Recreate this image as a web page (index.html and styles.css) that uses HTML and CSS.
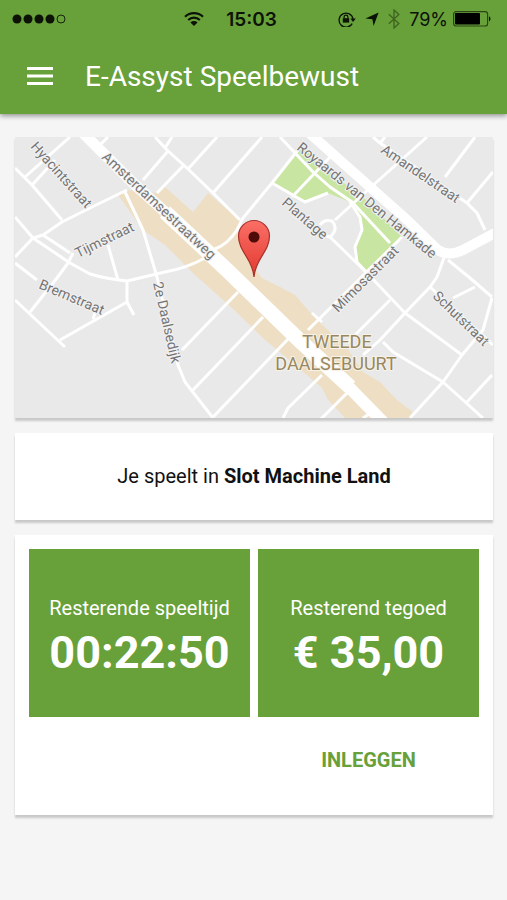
FILE: index.html
```html
<!DOCTYPE html>
<html lang="nl">
<head>
  <meta charset="UTF-8">
  <meta name="viewport" content="width=device-width, initial-scale=1.0">
  <title>E-Assyst Speelbewust</title>
  <link rel="stylesheet" href="styles.css">
</head>
<body>
  <header class="app-header">
    <div class="status-bar">
      <div class="status-left">
        <svg class="signal" width="54" height="12" viewBox="0 0 54 12" aria-hidden="true">
          <circle cx="5" cy="6" r="4.5"/>
          <circle cx="16" cy="6" r="4.5"/>
          <circle cx="27" cy="6" r="4.5"/>
          <circle cx="38" cy="6" r="4.5"/>
          <circle cx="49" cy="6" r="4" fill="none" stroke="#16220c"/>
        </svg>
        <svg width="20" height="14" viewBox="0 0 20 14" aria-hidden="true">
          <g fill="none" stroke="#0c1206" stroke-width="2.2">
            <path d="M1 4.8a13 13 0 0 1 18 0"/>
            <path d="M4.2 8a8.5 8.5 0 0 1 11.6 0"/>
          </g>
          <path d="M10 14 6.4 10.4a5.2 5.2 0 0 1 7.2 0z" fill="#0c1206"/>
        </svg>
      </div>
      <span class="time">15:03</span>
      <div class="status-right">
        <svg width="18" height="16" viewBox="0 0 18 16" aria-hidden="true">
          <path d="M14.2 12.6A7 7 0 1 1 15 8" fill="none" stroke="#0c1206" stroke-width="1.3"/>
          <path d="M12.4 7.4h5.4L15 11z"/>
          <path d="M4.8 7.2h6.4v4.4H4.8z"/>
          <path d="M6.1 7.4V6a1.9 1.9 0 0 1 3.8 0v1.4" fill="none" stroke="#0c1206" stroke-width="1.2"/>
        </svg>
        <svg width="14" height="14" viewBox="0 0 14 14" aria-hidden="true">
          <path d="M13.6.4 8.6 14 7.4 7.2.4 6.4z"/>
        </svg>
        <svg width="12" height="20" viewBox="0 0 12 20" aria-hidden="true">
          <path d="M.8 5.2 10.8 14.4 6 19V1l4.8 4.6L.8 14.8" fill="none" stroke="#3f6622" stroke-width="1.4"/>
        </svg>
        <span class="percent">79%</span>
        <svg width="38" height="16" viewBox="0 0 38 16" aria-hidden="true">
          <rect x=".6" y=".6" width="34" height="14.4" rx="2.6" fill="none" stroke="#2a4415" stroke-width="1.2"/>
          <rect x="2" y="2" width="25" height="11.6" rx="1" fill="#000"/>
          <path d="M36 5.2a3 3 0 0 1 0 5.2z"/>
        </svg>
      </div>
    </div>
    <div class="toolbar">
      <button class="menu-btn" type="button" aria-label="Menu">
        <svg width="26" height="18" viewBox="0 0 26 18" aria-hidden="true">
          <path d="M0 1.5h26M0 9h26M0 16.5h26" stroke="#fff" stroke-width="3"/>
        </svg>
      </button>
      <h1>E-Assyst Speelbewust</h1>
    </div>
  </header>

  <main class="content">
    <section class="card map-card">
      <svg class="map" viewBox="0 0 478 281" role="img" aria-label="Kaart">
        <rect width="478" height="281" fill="#e9e9e9"/>
        <!-- winkelgebied -->
        <path fill="#eedfc4" d="M103 58 112 53 142 56 150 50 178 75 193 56 227 85 222 95 235 125 247 141 265 150 280 158 300 181 332 211 348 235 365 245 382 263 398 275 395 281H330L313 263 307 251 277 225 250 203 217 171 180 138 150 108 128 93z"/>
        <!-- park -->
        <path fill="#c8e6a2" d="M282 13 257 46 290 65 313 56 335 65 345 80 347 93 340 110 342 125 352 133 387 100 348 60 315 36 290 12z"/>
        <g class="roads">
          <path d="M0 31 17 48 47 83M55 0 10 40M40 23 18 47M93 0 85 8"/>
          <path d="M140 0 152 13 173 32 198 56 225 83M157 0 150 11M153 14 128 43M168 29 142 56M202 0 173 32M247 0 198 56"/>
          <path d="M283 13 257 46 228 81 222 93Q213 107 200 112L190 121Q172 131 150 135L112 144Q92 142 75 137L55 126 18 101 0 80"/>
          <path d="M112 53 77 70 47 85 28 98 18 101 0 120M28 98 55 116M58 116 53 126 42 141 15 175M0 126 22 143M93 108 103 143"/>
          <path d="M110 55 128 93 142 140 163 228 170 245 198 281M0 163 50 210M112 143V165L119 178M112 165 45 203M80 176 78 182"/>
          <path d="M223 155 167 213M248 180 178 253M275 200 198 280M307 238 273 271 268 281M332 256 305 283M357 275 348 281"/>
          <path d="M297 176 307 185M387 100 293 193M375 163 332 206M315 100 352 136 390 176 447 218M433 123 455 141 477 160"/>
          <path d="M430 118 422 140 415 150 390 176 365 203 348 218M368 205 378 215 428 245 468 281M477 161 468 193 447 218 428 245 395 281"/>
          <path d="M477 238 452 265M460 150 438 161M415 150 478 208M265 0 298 35 315 50 337 65 375 106"/>
          <path d="M317 18 277 60M257 46 290 65 313 56M412 0 355 51 320 83M305 88Q309 82 317 84 324 92 315 100L308 98"/>
          <path d="M358 0 365 6 452 66 462 76 470 93M370 0 366 5M460 0 430 40M478 35 452 66M335 65 345 80 347 93 340 110 342 125 352 136"/>
        </g>
        <path class="road-main" stroke-width="11" d="M66-6 118 46 160 84"/>
        <path class="road-main" stroke-width="15" d="M150 75 213 134 283 202 335 250"/>
        <path class="road-main" stroke-width="12" d="M325 241 370 287"/>
        <path class="road-main" stroke-width="10" d="M292-6 355 50 392 83 423 113Q434 120 448 113L480 96"/>
        <g class="labels">
          <text transform="translate(15 10) rotate(48)">Hyacintstraat</text>
          <text transform="translate(86 21) rotate(43)">Amsterdamsestraatweg</text>
          <text transform="translate(63 121) rotate(-26)">Tijmstraat</text>
          <text transform="translate(23 151) rotate(23)">Bremstraat</text>
          <text transform="translate(138 146) rotate(77)">2e Daalsedijk</text>
          <text transform="translate(281 12) rotate(39)">Royaards van Den Hamkade</text>
          <text transform="translate(365 15) rotate(34)">Amandelstraat</text>
          <text transform="translate(266 67) rotate(41)">Plantage</text>
          <text transform="translate(323 176) rotate(-45)">Mimosastraat</text>
          <text transform="translate(417 160) rotate(44)">Schutstraat</text>
        </g>
        <g class="district">
          <text x="322" y="211">TWEEDE</text>
          <text x="321" y="233">DAALSEBUURT</text>
        </g>
        <!-- marker -->
        <linearGradient id="pin" x1="0" y1="0" x2="0" y2="1">
          <stop offset="0" stop-color="#fb6f66"/>
          <stop offset="1" stop-color="#e2392f"/>
        </linearGradient>
        <path d="M239 140C238 122 223.500 115 223.500 99a15.500 15.500 0 0 1 31 0C254.500 115 240 122 239 140z" fill="url(#pin)" stroke="#a8322b" stroke-width="1.200"/>
        <circle cx="239" cy="100" r="5.500" fill="#4f0b08"/>
      </svg>
    </section>

    <section class="card location-card">
      <p>Je speelt in <strong>Slot Machine Land</strong></p>
    </section>

    <section class="card balance-card">
      <div class="tiles">
        <div class="tile">
          <span class="tile-label">Resterende speeltijd</span>
          <span class="tile-value">00:22:50</span>
        </div>
        <div class="tile">
          <span class="tile-label">Resterend tegoed</span>
          <span class="tile-value">€ 35,00</span>
        </div>
      </div>
      <div class="actions">
        <button class="deposit-btn" type="button">INLEGGEN</button>
      </div>
    </section>
  </main>
</body>
</html>
```

FILE: styles.css
```css
* {
  box-sizing: border-box;
}
body {
  margin: 0;
  min-height: 100vh;
  background: #f5f5f5;
  color: #111;
  font-family: Roboto, Arial, sans-serif;
}
button {
  border: none;
  background: none;
  padding: 0;
  font-family: inherit;
  cursor: pointer;
}
svg {
  display: block;
}

/* header */
.app-header {
  background: #68a03a;
  box-shadow: 0 2px 5px rgba(0, 0, 0, 0.4);
}
.status-bar {
  display: grid;
  grid-template-columns: 1fr auto 1fr;
  align-items: center;
  gap: 22px;
  height: 38px;
  padding: 0 16px 0 12px;
  color: #0c1206;
  fill: #0c1206;
  font-family: Inter, Arial, sans-serif;
  font-size: 18px;
}
.status-left {
  display: flex;
  align-items: center;
  justify-content: space-between;
}
.status-right {
  display: flex;
  align-items: center;
  justify-content: flex-end;
  gap: 9px;
}
.time {
  font-weight: 600;
  font-size: 19px;
}
.percent {
  margin-right: -4px;
}
.toolbar {
  display: flex;
  align-items: center;
  gap: 32px;
  height: 76px;
  padding: 0 27px;
}
.toolbar h1 {
  margin: 0;
  color: #fff;
  font-size: 28px;
  font-weight: 400;
}

/* cards */
.content {
  display: flex;
  flex-direction: column;
  gap: 15px;
  padding: 23px 14px 22px 15px;
}
.card {
  background: #fff;
  box-shadow: 0 3px 2px rgba(0, 0, 0, 0.18);
}
.map {
  width: 100%;
  height: auto;
}
.roads path {
  fill: none;
  stroke: #fff;
  stroke-width: 3;
  stroke-linejoin: round;
}
.road-main {
  fill: none;
  stroke: #fff;
}
.labels text {
  fill: #757575;
  stroke: #f2f2f2;
  stroke-width: 2px;
  paint-order: stroke;
  font-size: 14px;
}
.district text {
  fill: #978861;
  stroke: #f7f3ea;
  stroke-width: 2px;
  paint-order: stroke;
  font-size: 18px;
  text-anchor: middle;
}
.location-card {
  padding: 30px 14px;
  text-align: center;
}
.location-card p {
  margin: 0;
  font-size: 20px;
  line-height: 27px;
}
.balance-card {
  padding: 14px;
}
.tiles {
  display: grid;
  grid-template-columns: 1fr 1fr;
  gap: 8px;
}
.tile {
  display: flex;
  flex-direction: column;
  align-items: center;
  justify-content: center;
  min-height: 168px;
  padding-top: 14px;
  background: #68a03a;
  color: #fff;
}
.tile-label {
  font-size: 20px;
  line-height: 26px;
}
.tile-value {
  font-size: 45px;
  font-weight: 700;
  line-height: 64px;
}
.actions {
  display: grid;
  grid-template-columns: 1fr 1fr;
  gap: 8px;
  padding: 20px 0 18px;
}
.deposit-btn {
  grid-column: 2;
  height: 46px;
  color: #68a03a;
  font-size: 20px;
  font-weight: 700;
}
```
